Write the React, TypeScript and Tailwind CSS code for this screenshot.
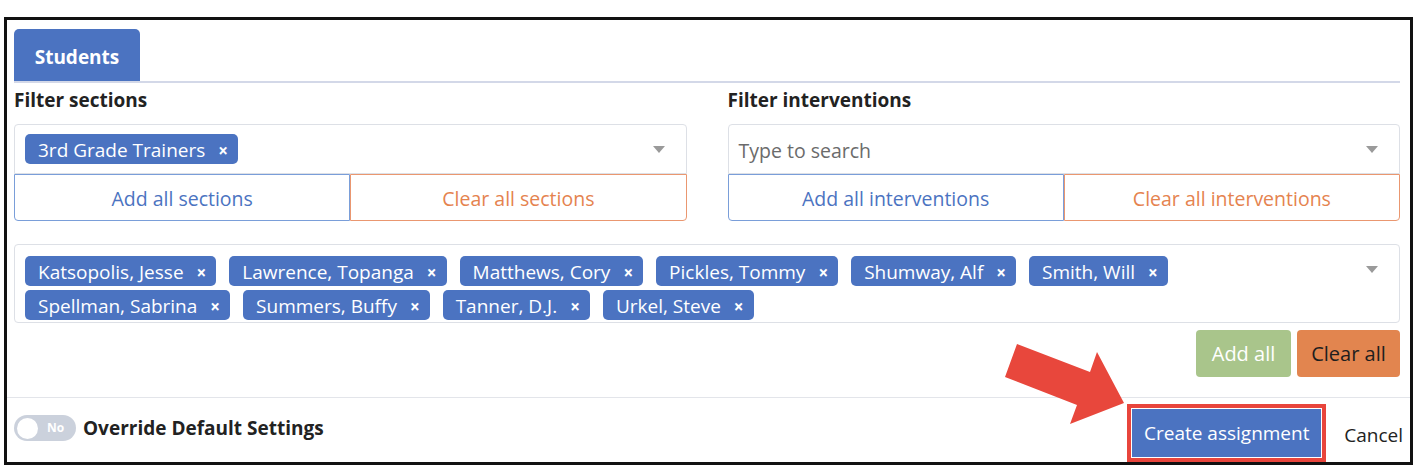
import { useState } from "react";

const students = [
  "Katsopolis, Jesse",
  "Lawrence, Topanga",
  "Matthews, Cory",
  "Pickles, Tommy",
  "Shumway, Alf",
  "Smith, Will",
  "Spellman, Sabrina",
  "Summers, Buffy",
  "Tanner, D.J.",
  "Urkel, Steve",
];

function Tag({ label }: { label: string }) {
  return (
    <span className="inline-flex h-[30px] items-center rounded-[5px] bg-[#4b73c1] pl-[13px] pr-[10px] pt-[3px] text-[19px] text-white">
      <span className="leading-none">{label}</span>
      <span className="ml-[13px] text-[17px] font-bold leading-none">×</span>
    </span>
  );
}

function Caret() {
  return (
    <svg width="12" height="7" viewBox="0 0 12 7" className="shrink-0">
      <path d="M0 0 L12 0 L6 7 Z" fill="#9a9a9a" />
    </svg>
  );
}

function FilterBlock({
  title,
  tags,
  placeholder,
  addLabel,
  clearLabel,
}: {
  title: string;
  tags: string[];
  placeholder?: string;
  addLabel: string;
  clearLabel: string;
}) {
  return (
    <div className="flex flex-col">
      <div className="mt-[5px] mb-[12px] text-[19px] font-bold leading-[24px] text-[#222]">{title}</div>
      <div className="flex h-[50px] items-center justify-between rounded-t-[4px] border border-[#dde0e6] pl-[10px] pr-[21px]">
        <div className="flex gap-2">
          {tags.map((t) => (
            <Tag key={t} label={t} />
          ))}
          {placeholder && <span className="pt-[4px] text-[19.5px] text-[#6b6b6b]">{placeholder}</span>}
        </div>
        <Caret />
      </div>
      <div className="flex h-[47px]">
        <button className="flex-1 rounded-bl-[4px] border border-[#7a9ed9] pt-[2px] text-[19.5px] text-[#4b73c1]">
          {addLabel}
        </button>
        <button className="flex-1 rounded-br-[4px] border border-[#ea9770] pt-[2px] text-[19.5px] text-[#e5834f]">
          {clearLabel}
        </button>
      </div>
    </div>
  );
}

export default function App() {
  const [override, setOverride] = useState(false);

  return (
    <div className="relative h-[468px] w-[1426px] bg-white pt-[17px] pl-[4px] font-['Open_Sans',sans-serif]">
      <div className="flex h-[448px] w-[1409px] flex-col border-[3px] border-[#111]">
        <div className="pl-[7px] pr-[10px] pt-[9px]">
          <div className="flex h-[52px] w-[126px] items-center justify-center rounded-t-[5px] bg-[#4b73c1] pt-[4px] text-[19px] font-bold text-white">
            Students
          </div>
          <div className="h-[2px] bg-[#d3d8e8]" />

          <div className="grid grid-cols-2 gap-x-[41px]">
            <FilterBlock
              title="Filter sections"
              tags={["3rd Grade Trainers"]}
              addLabel="Add all sections"
              clearLabel="Clear all sections"
            />
            <FilterBlock
              title="Filter interventions"
              tags={[]}
              placeholder="Type to search"
              addLabel="Add all interventions"
              clearLabel="Clear all interventions"
            />
          </div>

          <div className="mt-[23px] flex h-[79px] items-start justify-between rounded-[4px] border border-[#dde0e6] pl-[10px] pr-[21px] pt-[11px]">
            <div className="flex flex-wrap gap-x-[13px] gap-y-[4px] pr-[20px]">
              {students.map((s) => (
                <Tag key={s} label={s} />
              ))}
            </div>
            <div className="pt-[10px]">
              <Caret />
            </div>
          </div>

          <div className="mt-[7px] flex justify-end gap-[6px]">
            <button className="h-[47px] w-[95px] rounded-[4px] bg-[#a9c58b] text-[20px] text-white">Add all</button>
            <button className="h-[47px] w-[103px] rounded-[4px] bg-[#e2854f] text-[20px] text-[#1e1e1e]">Clear all</button>
          </div>
        </div>

        <div className="mt-[20px] h-[1px] bg-[#e3e5ea]" />

        <div className="flex flex-1 items-start justify-between pl-[7px] pr-[7px]">
          <div className="mt-[16px] flex items-center gap-[7px]">
            <button
              onClick={() => setOverride(!override)}
              className="relative flex h-[26px] w-[62px] items-center rounded-full bg-[#cbd1dc]"
            >
              <span className="ml-[3px] h-[21px] w-[21px] rounded-full bg-white" />
              <span className="ml-[9px] text-[12px] font-bold text-white">No</span>
            </button>
            <span className="text-[19px] font-bold text-[#222]">Override Default Settings</span>
          </div>

          <div className="mt-[6px] flex items-center">
            <div className="border-[4px] border-[#e8453c] p-[1px]">
              <button className="h-[48px] w-[189px] bg-[#4b73c1] text-[19px] text-white">Create assignment</button>
            </div>
            <span className="ml-[18px] mt-[4px] text-[19px] text-[#222]">Cancel</span>
          </div>
        </div>
      </div>

      <svg
        className="pointer-events-none absolute left-[1000px] top-[340px]"
        width="130"
        height="90"
        viewBox="1000 340 130 90"
      >
        <polygon
          points="1017,344 1005,377 1077,405 1070,424 1124,403 1097,352 1090,372"
          fill="#e8473c"
        />
      </svg>
    </div>
  );
}
